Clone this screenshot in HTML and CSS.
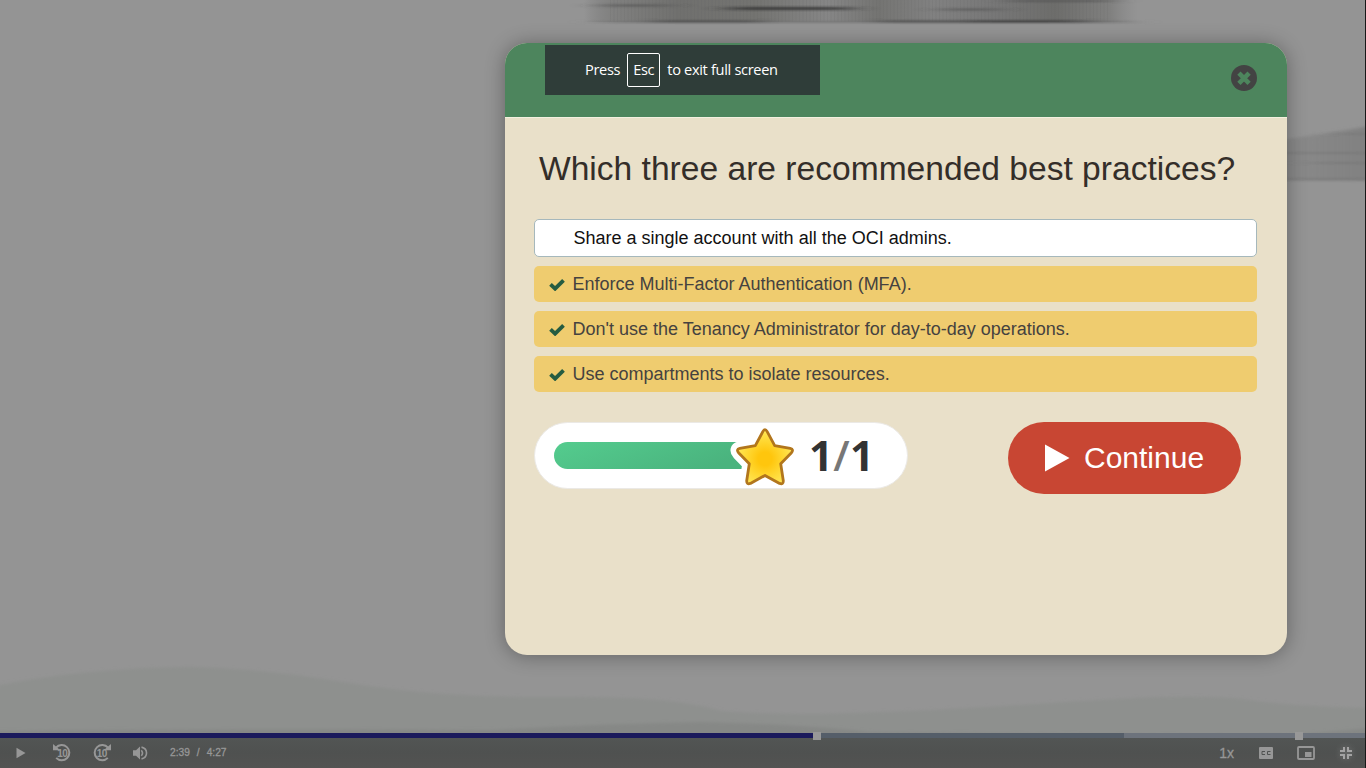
FILE: index.html
```html
<!DOCTYPE html>
<html lang="en">
<head>
<meta charset="utf-8">
<title>Interactive video</title>
<link rel="stylesheet" href="styles.css">
</head>
<body>
<main class="player">
  <svg class="scene" viewBox="0 0 1366 768" aria-hidden="true">
    <defs>
      <filter id="soft" x="-5%" y="-30%" width="110%" height="160%"><feGaussianBlur stdDeviation="3 1.500"/></filter>
      <filter id="streak" filterUnits="userSpaceOnUse" x="560" y="-10" width="830" height="220"><feGaussianBlur stdDeviation="14 .9"/></filter>
      <linearGradient id="board" x1="0" x2="1">
        <stop offset="0" stop-color="#777" stop-opacity="0"/>
        <stop offset=".05" stop-color="#818180"/>
        <stop offset=".17" stop-color="#70706e"/>
        <stop offset=".31" stop-color="#747471"/>
        <stop offset=".44" stop-color="#868686"/>
        <stop offset=".53" stop-color="#747472"/>
        <stop offset=".63" stop-color="#818181"/>
        <stop offset=".74" stop-color="#777"/>
        <stop offset=".85" stop-color="#6d6d6b"/>
        <stop offset=".95" stop-color="#80807f"/>
        <stop offset="1" stop-color="#888" stop-opacity="0"/>
      </linearGradient>
      <linearGradient id="side" x1="0" x2="1">
        <stop offset="0" stop-color="#858585" stop-opacity=".6"/>
        <stop offset="1" stop-color="#7f7f7f"/>
      </linearGradient>
      <pattern id="grain" width="7" height="24" patternUnits="userSpaceOnUse"><path d="M1.500 0V24M5 0V24" stroke="#5d5d5b" stroke-opacity=".13"/></pattern>
    </defs>
    <rect width="1366" height="768" fill="#949494"/>
    <rect x="584" y="0" width="554" height="22" fill="url(#board)"/>
    <rect x="610" y="0" width="500" height="22" fill="url(#grain)"/>
    <g filter="url(#streak)">
      <path d="M600 5.500H670M940 9.500H1000M1010 1H1110" stroke="#4f4f4f" stroke-width="1.500"/>
      <path d="M728 8.500H852" stroke="#333" stroke-width="2.500"/>
      <path d="M600 22H1130" stroke="#777" stroke-width="2"/>
      <path d="M650 21.500H765" stroke="#4b4b4b" stroke-width="2"/>
      <path d="M875 21.500H1095" stroke="#4d4d4d" stroke-width="2"/>
      <path d="M970 21.500H1070" stroke="#333" stroke-width="1.500"/>
    </g>
    <path d="M1270 141Q1320 135 1380 124V181H1270Z" fill="url(#side)" filter="url(#soft)"/>
    <g filter="url(#streak)" stroke="#6c6c6c" stroke-opacity=".5" stroke-width="1.500">
      <path d="M1280 153H1380M1310 163H1380M1280 179H1380M1340 134H1380"/>
    </g>
    <path d="M-10 687Q80 668 190 667Q260 668 350 683T560 697T720 711Q790 716 880 712Q960 709 1080 701T1250 700T1380 708V780H-10Z" fill="#8e908e" filter="url(#soft)"/>
    <path d="M-10 731Q300 728 490 730Q600 724 700 722Q800 724 870 732L1280 736L1380 727V780H-10Z" fill="#868886" filter="url(#soft)"/>
    <rect x="1365" width="1" height="768" fill="#181818"/>
  </svg>

  <div class="stage">
    <section class="quiz" role="dialog" aria-label="Question">
      <header class="quiz-head">
        <div class="hint"><span>Press</span><kbd class="key">Esc</kbd><span>to exit full screen</span></div>
        <svg class="close" viewBox="0 0 26 26"><circle cx="13" cy="13" r="13" fill="#434343"/><path d="M7.900 8.100L18.100 18.300M18.100 8.100L7.900 18.300" stroke="#4d855d" stroke-width="4.600"/></svg>
      </header>
      <div class="quiz-body">
        <h1 class="question">Which three are recommended best practices?</h1>
        <ul class="answers">
          <li class="answer plain"><span class="tick"></span><span class="label">Share a single account with all the OCI admins.</span></li>
          <li class="answer"><svg class="tick" viewBox="0 0 16 13"><path d="M1.500 6.400L6.100 10.700L14.500 2.300" class="tick-line"/></svg><span class="label">Enforce Multi-Factor Authentication (MFA).</span></li>
          <li class="answer"><svg class="tick" viewBox="0 0 16 13"><path d="M1.500 6.400L6.100 10.700L14.500 2.300" class="tick-line"/></svg><span class="label">Don't use the Tenancy Administrator for day-to-day operations.</span></li>
          <li class="answer"><svg class="tick" viewBox="0 0 16 13"><path d="M1.500 6.400L6.100 10.700L14.500 2.300" class="tick-line"/></svg><span class="label">Use compartments to isolate resources.</span></li>
        </ul>
        <div class="result">
          <div class="score">
            <svg class="meter" viewBox="0 0 242 65">
              <defs>
                <linearGradient id="fill" x2="1" y2=".35"><stop stop-color="#54cc8e"/><stop offset="1" stop-color="#4ab37e"/></linearGradient>
                <radialGradient id="gold" cx=".5" cy=".54" r=".5"><stop offset=".25" stop-color="#ffc60d"/><stop offset=".6" stop-color="#ffd52d"/><stop offset="1" stop-color="#ffe552"/></radialGradient>
                <path id="star" d="M208.800 8.700Q211 4.700 213.200 8.700L220.700 22.600L236.200 25.400Q240.300 26.400 237.200 30L226.700 40.800L229.300 57.700Q229.500 61.900 225.600 60.400L211 52.400L196.400 60.400Q192.500 61.900 192.700 57.700L195.300 40.800L184.800 30Q181.700 26.400 185.800 25.400L201.300 22.600Z"/>
              </defs>
              <path d="M13.500 19H200V46H13.500A13.500 13.500 0 0 1 13.500 19Z" fill="url(#fill)"/>
              <use href="#star" class="star-halo"/>
              <use href="#star" class="star-face"/>
            </svg>
            <div class="points"><span>1</span><span class="slash">/</span><span>1</span></div>
          </div>
          <button class="continue"><svg class="go" viewBox="0 0 25 28"><path d="M0 0.500L24.500 14L0 27.500Z" fill="#fff"/></svg><span>Continue</span></button>
        </div>
      </div>
    </section>
  </div>

  <div class="timeline"><div class="played"></div><div class="buffered"></div><div class="rest"></div><i class="mark first"></i><i class="mark second"></i></div>
  <footer class="controls">
    <div class="group left">
      <svg class="icon play" viewBox="0 0 10 12"><path d="M.5 .8L9.500 6L.5 11.200Z"/></svg>
      <svg class="icon skip" viewBox="0 0 18 18"><path d="M3 3.700A7.600 7.600 0 1 1 3.200 13.900" class="ring"/><path d="M0 0L7.300 6.300H0Z"/><text x="9.300" y="12.700">10</text></svg>
      <svg class="icon skip forward" viewBox="0 0 18 18"><path d="M15 3.700A7.600 7.600 0 1 0 14.800 13.900" class="ring"/><path d="M18 0L10.700 6.300H18Z"/><text x="8.700" y="12.700">10</text></svg>
      <svg class="icon volume" viewBox="0 0 14 14"><path d="M0 4.300H3L7 .6V13.400L3 9.700H0Z"/><path d="M8.300 4.200Q10.700 7 8.300 9.800" class="wave"/><path d="M8.500 1.100C15.200 2.600 15.200 11.400 8.500 12.900" class="wave"/></svg>
      <span class="time"><span>2:39</span><span>/</span><span>4:27</span></span>
    </div>
    <div class="group right">
      <span class="speed">1x</span>
      <svg class="icon cc" viewBox="0 0 14 12"><rect width="14" height="12" rx="1"/><path d="M6 4.500H3V7.500H6M11.500 4.500H8.500V7.500H11.500" class="cut"/></svg>
      <svg class="icon pip" viewBox="0 0 18 14"><rect x="1" y="1" width="16" height="12" rx="1" class="frame"/><rect x="8" y="6" width="6.500" height="5"/></svg>
      <svg class="icon shrink" viewBox="0 0 12 12"><path d="M4 0V4H0M8 0V4H12M4 12V8H0M8 12V8H12" class="corner"/></svg>
    </div>
  </footer>
</main>
</body>
</html>
```
FILE: styles.css
```css
* { box-sizing: border-box; }
body { margin: 0; font-family: "Liberation Sans", Arial, sans-serif; }
.player { position: relative; display: flex; flex-direction: column; width: 1366px; height: 768px; overflow: hidden; background: #949494; }
.scene { position: absolute; inset: 0; width: 1366px; height: 768px; }

.stage { position: relative; flex: 1; padding: 43px 79px 0 505px; }
.quiz { height: 612px; border-radius: 22px; overflow: hidden; background: #e9e0c9; box-shadow: 0 1px 20px rgba(0, 0, 0, .33); }
.quiz-head { display: flex; justify-content: space-between; align-items: flex-start; height: 75px; padding: 2px 30px 0 40px; background: #4d855d; border-bottom: 1px solid #f3f0df; }
.hint { display: flex; align-items: center; width: 275px; height: 50px; padding-left: 40px; background: #2f3d39; color: #fff; font: 14.600px "Open Sans", "Noto Sans", sans-serif; letter-spacing: -.32px; white-space: nowrap; }
.hint span { padding-bottom: 2px; }
.key { display: flex; align-items: center; justify-content: center; width: 33px; height: 34px; margin: 0 7px 0 7px; padding-bottom: 2px; border: 1px solid #fff; border-radius: 2px; font: inherit; }
.close { width: 26px; height: 26px; margin-top: 20px; }

.quiz-body { padding: 30px 30px 0 29px; }
.question { margin: 0; padding-left: 5px; color: #342e29; font-size: 33.600px; font-weight: 400; line-height: 41px; white-space: nowrap; }
.answers { display: flex; flex-direction: column; gap: 9px; margin: 30px 0 0; padding: 0; list-style: none; }
.answer { display: flex; align-items: center; height: 36px; padding-left: 15px; border-radius: 5px; background: #efcc6f; color: #45423f; font-size: 18px; white-space: nowrap; }
.answer.plain { height: 38px; border: 1px solid #a6b8bc; background: #fff; color: #111; }
.tick { width: 16px; height: 13px; margin: 1px 7.500px 0 0; }
.tick-line { fill: none; stroke: #255c41; stroke-width: 3.800; }

.result { display: flex; justify-content: space-between; align-items: flex-start; margin-top: 30px; padding-right: 16px; }
.score { display: flex; align-items: center; width: 374px; height: 67px; padding-left: 19px; border: 1px solid #ebe9e5; border-radius: 34px; background: #fff; }
.meter { width: 242px; height: 65px; }
.star-halo { fill: #fff; stroke: #fff; stroke-width: 14px; stroke-linejoin: round; }
.star-face { fill: url(#gold); stroke: #b2761c; stroke-width: 2.800px; stroke-linejoin: round; }
.points { display: flex; margin-left: 13px; padding-bottom: 2px; color: #333; font: 700 42px/63px "Open Sans", "Noto Sans", sans-serif; }
.slash { color: #777; font-weight: 600; width: 17px; text-align: center; }
.continue { display: flex; align-items: center; width: 233px; height: 72px; padding: 0 0 0 37px; border: 0; border-radius: 36px; background: #c84633; color: #fff; font: 30px "Liberation Sans", Arial, sans-serif; }
.go { width: 25px; height: 28px; margin-right: 14px; }

.timeline { position: relative; display: flex; height: 5px; }
.played { width: 815px; background: #1b1a5c; }
.buffered { width: 309px; background: #555e69; }
.rest { width: 241px; background: #6d737c; }
.mark { position: absolute; top: -1px; width: 8px; height: 8px; background: #989898; z-index: 1; }
.mark.first { left: 813px; }
.mark.second { left: 1295px; }
.timeline { z-index: 1; }

.controls { position: relative; display: flex; justify-content: space-between; align-items: center; width: 1365px; height: 30px; padding: 0 13px 0 16px; background: linear-gradient(#525554, #4f5150 50%, #535352); color: #979797; }
.group { display: flex; align-items: center; }
.icon { fill: #979797; flex: none; overflow: visible; }
.play { width: 10px; height: 12px; margin-right: 27px; }
.skip { width: 18px; height: 18px; margin-right: 22px; }
.skip text { font: 700 10px "Liberation Sans", Arial, sans-serif; text-anchor: middle; letter-spacing: -.5px; }
.ring { fill: none; stroke: #979797; stroke-width: 2; }
.volume { width: 14px; height: 14px; margin-right: 23px; }
.wave { fill: none; stroke: #979797; stroke-width: 1.600; }
.time { display: flex; gap: 7px; font-size: 10.200px; line-height: 12px; -webkit-text-stroke: .3px #979797; }
.speed { margin-right: 25px; font-size: 14px; -webkit-text-stroke: .3px #979797; }
.cc { width: 14px; height: 12px; margin-right: 24px; }
.cut { fill: none; stroke: #505251; stroke-width: 1; }
.pip { width: 18px; height: 14px; margin-right: 25px; }
.frame { fill: none; stroke: #979797; stroke-width: 1.800; }
.shrink { width: 12px; height: 12px; filter: drop-shadow(0 0 3px rgba(190, 190, 190, .4)); }
.corner { fill: none; stroke: #a3a3a3; stroke-width: 2; }
```
